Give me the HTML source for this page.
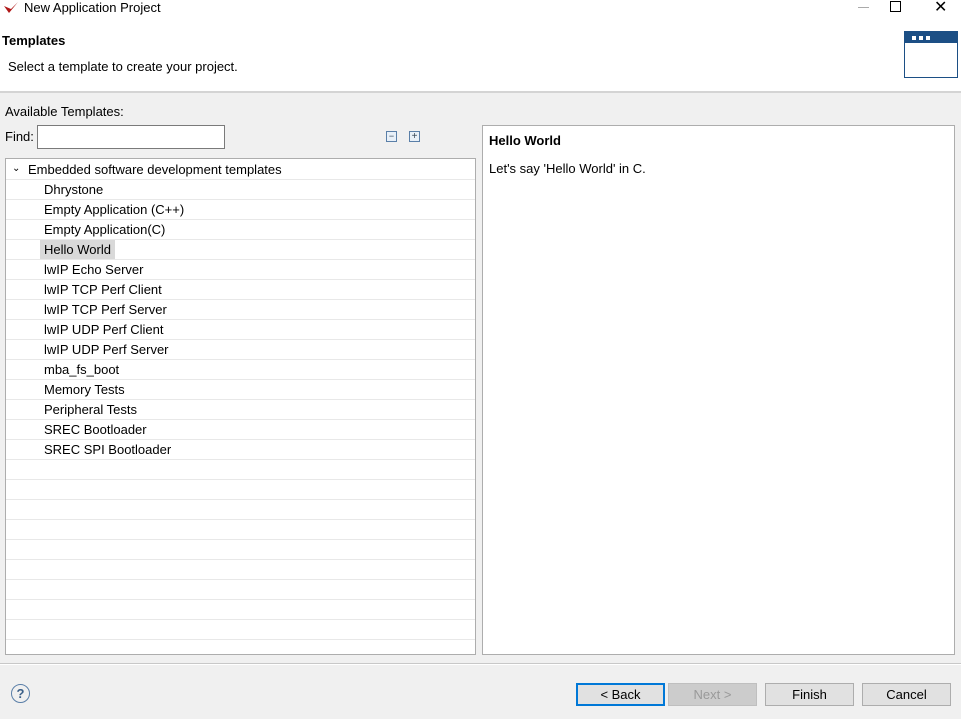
<!DOCTYPE html><html><head><style>
body{margin:0;width:961px;height:719px;background:#f0f0f0;font-family:"Liberation Sans","Noto Sans CJK SC",sans-serif;font-size:13px;color:#000;position:relative;overflow:hidden}
.a{position:absolute}
.row{position:absolute;left:0;width:469px;height:19px;border-bottom:1px solid #e8e8e8;line-height:19px}
.btn{position:absolute;top:683px;width:87px;height:21px;border:1px solid #adadad;background:#e1e1e1;text-align:center;line-height:21px}
.d{width:4px;height:4px;background:#fff;margin-right:3px}
</style></head><body>
<div class="a" style="left:0;top:0;width:961px;height:91px;background:#fff;border-bottom:2px solid #d4d4d4"></div>
<svg class="a" style="left:3px;top:1px" width="16" height="14"><path d="M1 5 L6 12 L15 1 L8 8 Z" fill="#b01818"/></svg>
<div class="a" style="left:24px;top:0px">New Application Project</div>
<div class="a" style="left:858px;top:7px;width:11px;height:1px;background:#aaa"></div>
<div class="a" style="left:890px;top:1px;width:9px;height:9px;border:1px solid #000"></div>
<div class="a" style="left:934px;top:-3px;font-size:16px">✕</div>
<div class="a" style="left:2px;top:33px;font-weight:bold">Templates</div>
<div class="a" style="left:8px;top:59px">Select a template to create your project.</div>
<div class="a" style="left:904px;top:31px;width:52px;height:45px;border:1px solid #1c4f85;background:#fff"><div style="height:11px;background:#1c4f85;display:flex;align-items:center;padding-left:7px"><div class="d"></div><div class="d"></div><div class="d"></div></div></div>
<div class="a" style="left:5px;top:104px">Available Templates:</div>
<div class="a" style="left:5px;top:129px">Find:</div>
<div class="a" style="left:37px;top:125px;width:186px;height:22px;border:1px solid #7a7a7a;background:#fff"></div>
<div class="a" style="left:386px;top:131px;width:9px;height:9px;border:1px solid #5a7fa8;background:#e8f0f8;font-size:9px;line-height:8px;text-align:center;color:#345">−</div>
<div class="a" style="left:409px;top:131px;width:9px;height:9px;border:1px solid #5a7fa8;background:#e8f0f8;font-size:10px;line-height:9px;text-align:center;color:#345">+</div>
<div class="a" style="left:5px;top:158px;width:469px;height:495px;border:1px solid #adadad;background:#fff;overflow:hidden">
<div class="row" style="top:1px"><span style="position:absolute;left:6px;top:-1px;font-size:10px">⌄</span><span style="position:absolute;left:22px">Embedded software development templates</span></div>
<div class="row" style="top:21px"><span style="position:absolute;left:38px">Dhrystone</span></div>
<div class="row" style="top:41px"><span style="position:absolute;left:38px">Empty Application (C++)</span></div>
<div class="row" style="top:61px"><span style="position:absolute;left:38px">Empty Application(C)</span></div>
<div class="row" style="top:81px"><span style="position:absolute;left:34px;background:#d9d9d9;padding:0 4px">Hello World</span></div>
<div class="row" style="top:101px"><span style="position:absolute;left:38px">lwIP Echo Server</span></div>
<div class="row" style="top:121px"><span style="position:absolute;left:38px">lwIP TCP Perf Client</span></div>
<div class="row" style="top:141px"><span style="position:absolute;left:38px">lwIP TCP Perf Server</span></div>
<div class="row" style="top:161px"><span style="position:absolute;left:38px">lwIP UDP Perf Client</span></div>
<div class="row" style="top:181px"><span style="position:absolute;left:38px">lwIP UDP Perf Server</span></div>
<div class="row" style="top:201px"><span style="position:absolute;left:38px">mba_fs_boot</span></div>
<div class="row" style="top:221px"><span style="position:absolute;left:38px">Memory Tests</span></div>
<div class="row" style="top:241px"><span style="position:absolute;left:38px">Peripheral Tests</span></div>
<div class="row" style="top:261px"><span style="position:absolute;left:38px">SREC Bootloader</span></div>
<div class="row" style="top:281px"><span style="position:absolute;left:38px">SREC SPI Bootloader</span></div>
<div class="row" style="top:301px"></div><div class="row" style="top:321px"></div><div class="row" style="top:341px"></div><div class="row" style="top:361px"></div><div class="row" style="top:381px"></div><div class="row" style="top:401px"></div><div class="row" style="top:421px"></div><div class="row" style="top:441px"></div><div class="row" style="top:461px"></div>
</div>
<div class="a" style="left:482px;top:125px;width:471px;height:528px;border:1px solid #adadad;background:#fff">
<div class="a" style="left:6px;top:7px;font-weight:bold">Hello World</div>
<div class="a" style="left:6px;top:35px">Let's say 'Hello World' in C.</div>
</div>
<div class="a" style="left:0;top:663px;width:961px;height:1px;background:#c8c8c8"></div>
<div class="a" style="left:0;top:664px;width:961px;height:1px;background:#fff"></div>
<div class="a" style="left:11px;top:684px;width:17px;height:17px;border:1.5px solid #5a7fa8;border-radius:50%;text-align:center;line-height:17px;color:#3a5f88;font-weight:bold;font-size:13px">?</div>
<div class="btn" style="left:576px;border:1px solid #0078d7;box-shadow:inset 0 0 0 1px #0078d7">&lt; Back</div>
<div class="btn" style="left:668px;background:#ccc;border-color:#bfbfbf;color:#999">Next &gt;</div>
<div class="btn" style="left:765px">Finish</div>
<div class="btn" style="left:862px">Cancel</div>
</body></html>
